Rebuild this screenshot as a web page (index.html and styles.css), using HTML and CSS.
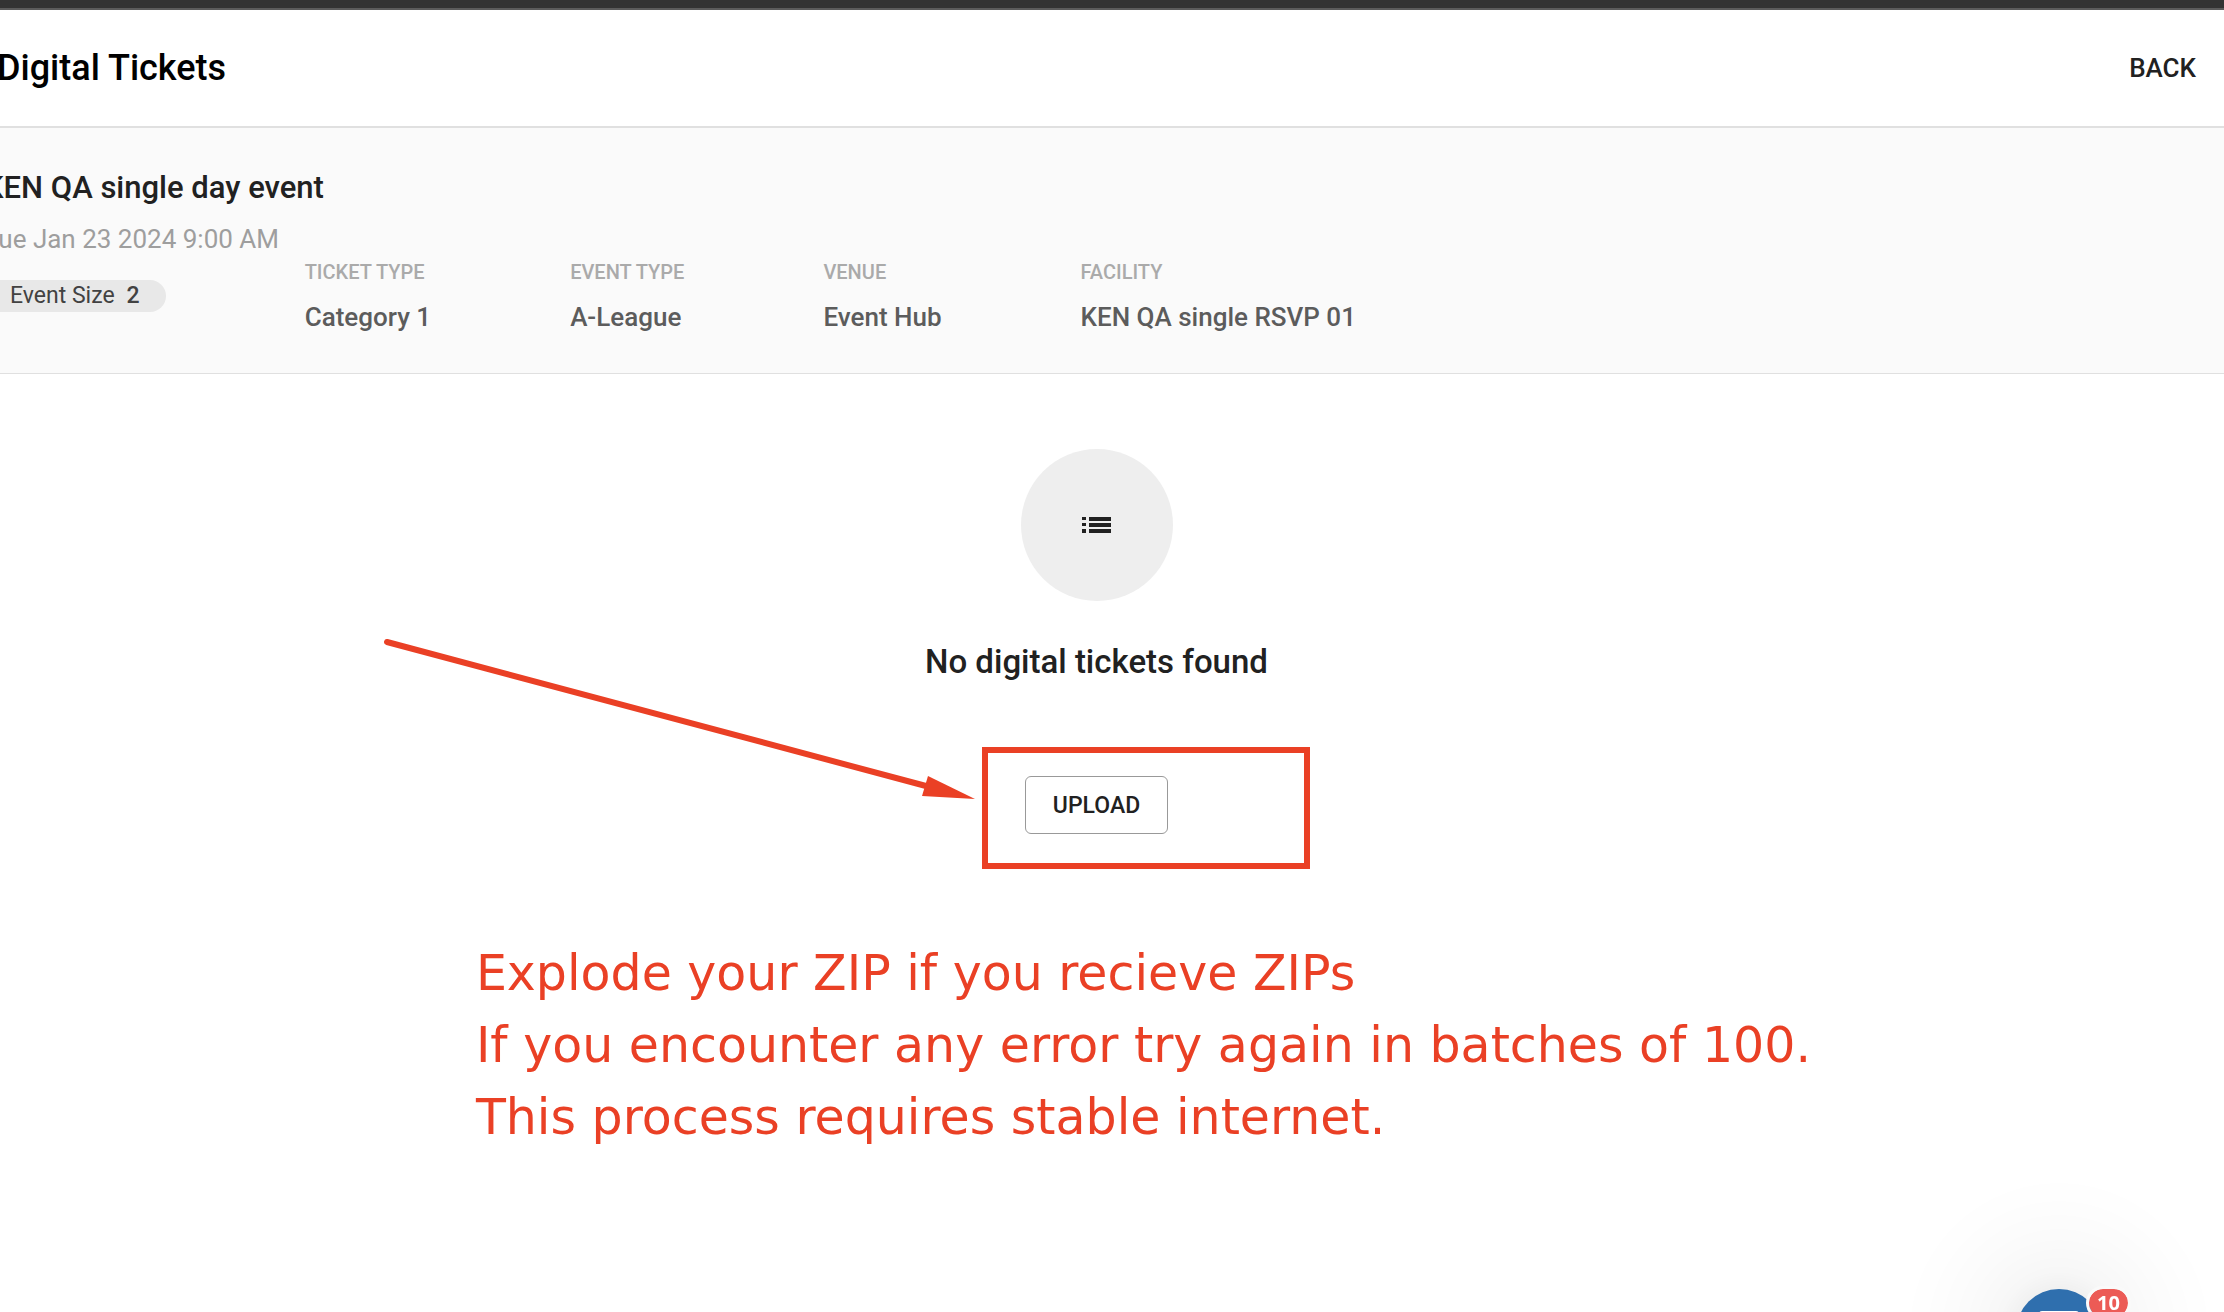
FILE: index.html
```
<!DOCTYPE html>
<html lang="en">
<head>
    <meta charset="UTF-8">
    <title>Digital Tickets</title>
    <link rel="stylesheet" href="styles.css">
</head>
<body>
<div class="topbar"></div>
<header class="header">
    <h1>Digital Tickets</h1>
    <button type="button" class="back">BACK</button>
</header>
<section class="event">
    <h2>KEN QA single day event</h2>
    <p class="date">Tue Jan 23 2024 9:00 AM</p>
    <div class="details">
        <div class="size">Event Size <b>2</b></div>
        <dl>
            <dt>TICKET TYPE</dt>
            <dd>Category 1</dd>
        </dl>
        <dl>
            <dt>EVENT TYPE</dt>
            <dd>A-League</dd>
        </dl>
        <dl>
            <dt>VENUE</dt>
            <dd>Event Hub</dd>
        </dl>
        <dl>
            <dt>FACILITY</dt>
            <dd>KEN QA single RSVP 01</dd>
        </dl>
    </div>
</section>
<main>
    <div class="empty">
        <div class="circle">
            <svg width="30" height="16" viewBox="0 0 30 16" fill="#212121">
                <path d="M0 0h4v3H0zM0 6h4v3H0zM0 12h4v4H0zM7 0h22v4H7zM7 6h22v4H7zM7 12h22v4H7z"/>
            </svg>
        </div>
        <h3>No digital tickets found</h3>
        <div class="upload-wrap">
            <button type="button" class="upload">UPLOAD</button>
            <!-- arrow and frame around the button -->
            <svg class="mark" width="940" height="250" viewBox="0 0 940 250">
                <path d="M7 12L546 156" fill="none" stroke="#ea4025" stroke-width="6" stroke-linecap="round"/>
                <path d="M548 146L595 169L542 166z" fill="#ea4025"/>
                <rect x="605" y="120" width="322" height="116" fill="none" stroke="#ea4025" stroke-width="6"/>
            </svg>
        </div>
    </div>
    <p class="note">
        Explode your ZIP if you recieve ZIPs<br>
        If you encounter any error try again in batches of 100.<br>
        This process requires stable internet.
    </p>
</main>
<div class="chat">
    <button type="button" class="chat-btn" aria-label="Chat">
        <svg width="40" height="40" viewBox="0 0 40 40" fill="#fff">
            <path d="M4 0h32a4 4 0 0 1 4 4v24a4 4 0 0 1-4 4H24l-8 8v-8H4a4 4 0 0 1-4-4V4a4 4 0 0 1 4-4z"/>
        </svg>
    </button>
    <span class="badge">10</span>
</div>
</body>
</html>
```
FILE: styles.css
```
* {
    margin: 0;
    padding: 0;
    box-sizing: border-box;
}

body {
    font-family: Roboto, "Liberation Sans", sans-serif;
    color: #212121;
    background-color: #fff;
    min-height: 100vh;
    overflow: hidden;
}

button {
    font-family: inherit;
    font-weight: 500;
    color: #212121;
    cursor: pointer;
}

.topbar {
    height: 10px;
    background-color: #333;
    border-bottom: 2px solid #5c5c5c;
}

.header {
    display: flex;
    justify-content: space-between;
    align-items: center;
    height: 118px;
    padding-right: 28px;
    margin-left: -3px;
    border-bottom: 2px solid #e0e0e0;
}

.header h1 {
    font-size: 36px;
    font-weight: 500;
    color: #000;
}

.back {
    border: none;
    background: none;
    font-size: 26px;
}

/* page is scrolled a little to the right */
.event {
    margin-left: -16px;
    padding: 40px 0;
    background-color: #fafafa;
    border-bottom: 1px solid #e0e0e0;
}

.event h2 {
    font-size: 31px;
    line-height: 40px;
    font-weight: 500;
}

.date {
    margin-top: 13px;
    font-size: 26px;
    line-height: 36px;
    color: #9e9e9e;
}

.details {
    display: flex;
    gap: 139px;
    padding-top: 3px;
}

.size {
    display: flex;
    gap: 12px;
    align-self: flex-start;
    margin-top: 20px;
    padding: 0 26px;
    border-radius: 16px;
    background-color: #e8e8e8;
    font-size: 23px;
    line-height: 32px;
    color: #424242;
}

.size b {
    font-weight: 500;
}

.details dt {
    font-size: 20px;
    line-height: 24px;
    font-weight: 500;
    color: #aaa;
}

.details dd {
    margin-top: 17px;
    font-size: 26px;
    line-height: 32px;
    font-weight: 500;
    color: #5c5c5c;
}

main {
    padding: 75px 31px 0 0;
}

.empty {
    display: flex;
    flex-direction: column;
    align-items: center;
}

.circle {
    display: flex;
    justify-content: center;
    align-items: center;
    width: 152px;
    height: 152px;
    border-radius: 50%;
    background-color: #eee;
}

.empty h3 {
    margin-top: 41px;
    font-size: 33px;
    line-height: 40px;
    font-weight: 500;
}

.upload-wrap {
    position: relative;
    margin-top: 94px;
}

.upload {
    display: block;
    height: 58px;
    padding: 0 27px;
    border: 1px solid #999;
    border-radius: 6px;
    background-color: #fff;
    font-size: 23px;
}

.mark {
    position: absolute;
    left: -645px;
    top: -146px;
    pointer-events: none;
}

.note {
    margin: 104px 0 0 21.7%;
    font-family: Verdana, "DejaVu Sans", sans-serif;
    font-size: 49px;
    line-height: 72px;
    color: #ea4025;
}

.chat {
    position: fixed;
    right: 5px;
    bottom: -180px;
    display: flex;
    justify-content: center;
    align-items: center;
    width: 320px;
    height: 320px;
    border-radius: 50%;
    background: radial-gradient(circle closest-side, rgba(0, 0, 0, .06) 26%, rgba(0, 0, 0, .03) 38%, rgba(0, 0, 0, .015) 60%, rgba(0, 0, 0, .004) 86%, transparent);
}

.chat-btn {
    display: flex;
    justify-content: center;
    align-items: center;
    width: 86px;
    height: 86px;
    border: none;
    border-radius: 50%;
    background-color: #2f6fae;
}

.chat-btn svg {
    width: 42px;
    height: 42px;
}

.badge {
    position: absolute;
    top: 114px;
    right: 88px;
    padding: 0 8px;
    border: 3px solid #fafafa;
    border-radius: 17px;
    background-color: #ec5b56;
    background-clip: padding-box;
    font-family: "Noto Sans", sans-serif;
    font-size: 20px;
    line-height: 28px;
    font-weight: 700;
    color: #fff;
}
```
